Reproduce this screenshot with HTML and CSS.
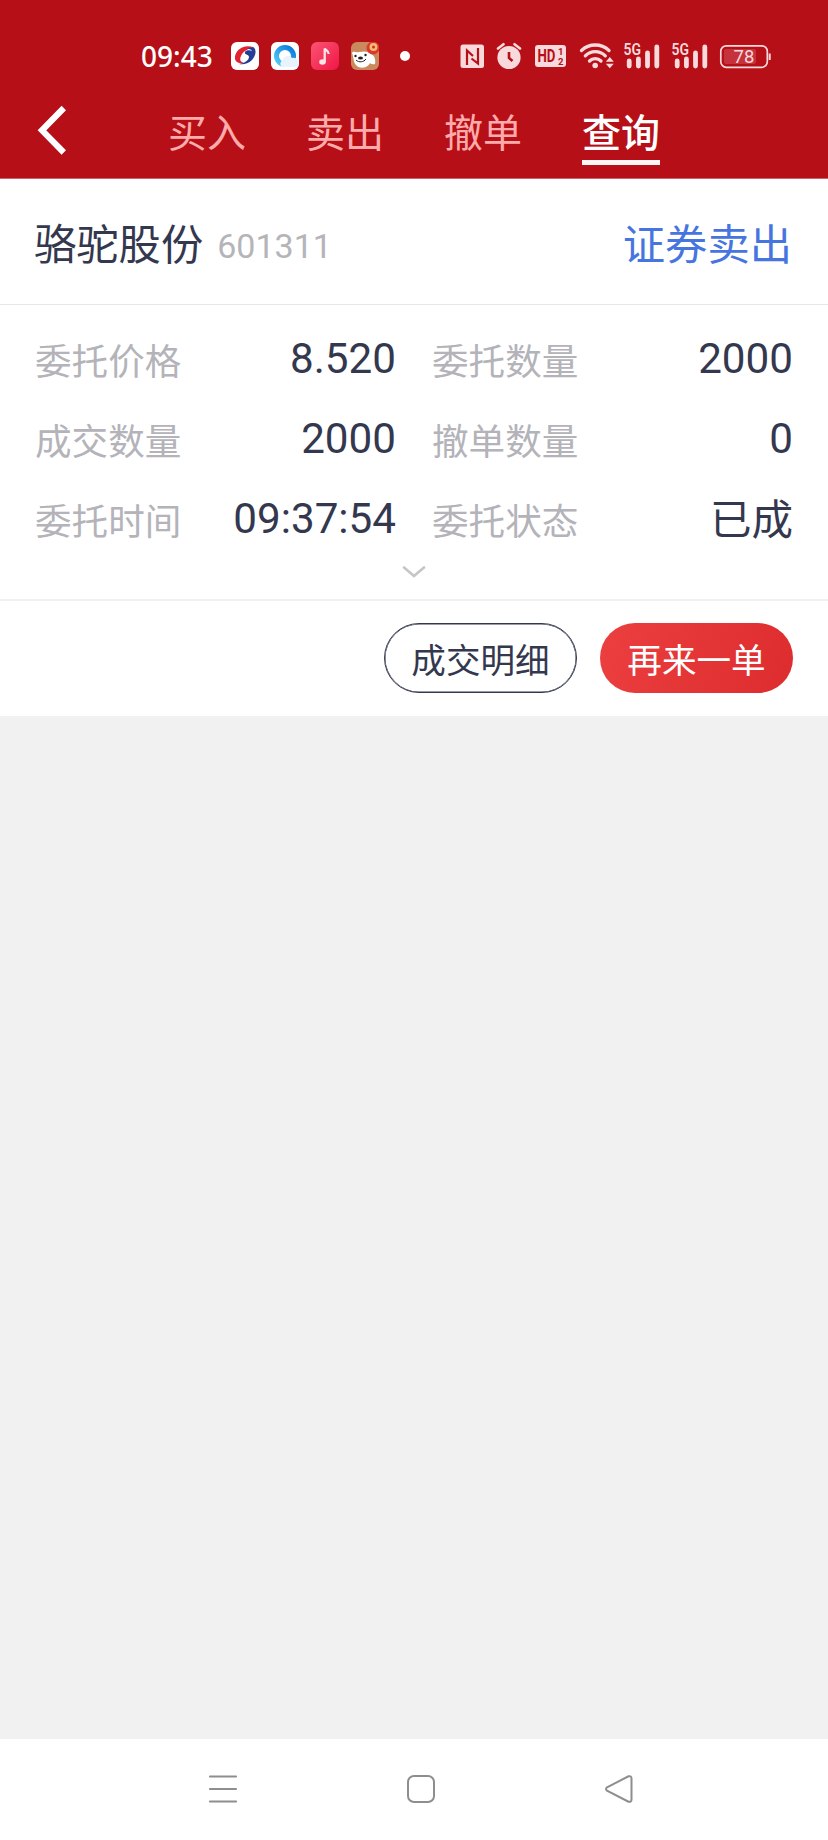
FILE: index.html
```html
<!DOCTYPE html>
<html lang="zh-CN">
<head>
<meta charset="utf-8">
<title>查询</title>
<link rel="stylesheet" href="styles.css">
</head>
<body>
<header class="top">
  <div class="status">
    <span class="clock">09:43</span>
    <div class="apps">
      <svg width="28" height="28" viewBox="0 0 28 28"><rect width="28" height="28" rx="6" fill="#fff"/><path d="M22 5C12 2 3 9 4 17c1 4 6 5 9 4-3-1-5-3-3-7 2-5 7-7 12-9z" fill="#e0232e"/><path d="M22 5c4 2 3 9-1 13-4 4-9 5-13 4 6-1 10-4 10-7 0-3-5-2-4-5 1-2 5-2 7-1-1-2-3-2-5-2 2-1 4-2 6-2z" fill="#253d94"/></svg>
      <svg width="28" height="28" viewBox="0 0 28 28"><defs><linearGradient id="sky" x1="0" y1="1" x2="1" y2="0"><stop offset="0" stop-color="#55ccf7"/><stop offset="1" stop-color="#0878dc"/></linearGradient></defs><rect width="28" height="28" rx="6" fill="#fff"/><circle cx="14" cy="14" r="8.500" fill="none" stroke="url(#sky)" stroke-width="5"/><path d="M11 25a4 4 0 0 1 1-7 5 5 0 0 1 9-2 5 5 0 0 1 4 9z" fill="#e7f3fd"/></svg>
      <svg width="28" height="28" viewBox="0 0 28 28"><defs><linearGradient id="music" x1="0" y1="0" x2="1" y2="1"><stop offset="0" stop-color="#fb5474"/><stop offset="1" stop-color="#f01645"/></linearGradient></defs><rect width="28" height="28" rx="6" fill="url(#music)"/><ellipse cx="11.500" cy="20" rx="3.300" ry="2.800" fill="#ffe4e8"/><path d="M13.700 20V6.500c1 2 4 2 4 5.500" fill="none" stroke="#ffe4e8" stroke-width="2.300"/></svg>
      <svg width="28" height="28" viewBox="0 0 28 28"><rect width="28" height="28" rx="6" fill="#c98b5e"/><path d="M1 11c1-3 4 0 7-1 5-1 9-1 12 2 3 1 5 5 4 10-3 1-5-1-5-1-2 5-10 6-13 3-4-3-3-8-5-13z" fill="#fff"/><circle cx="22" cy="6" r="6.500" fill="#dc382c"/><circle cx="22.500" cy="5" r="4" fill="#f3bd73"/><circle cx="22.500" cy="5" r="1.500" fill="#ce332a"/><circle cx="4.500" cy="14" r="1.200" fill="#222"/><circle cx="14.500" cy="13" r="1.200" fill="#222"/><ellipse cx="9.500" cy="16" rx="2.500" ry="1.500" fill="#222"/><path d="M5 18c3 3 8 2 10-1" fill="none" stroke="#222"/></svg>
    </div>
    <i class="dot"></i>
    <div class="system">
      <svg class="nfc" width="24" height="26" viewBox="460 42 24 26"><rect x="460.500" y="43.500" width="23.500" height="23.500" rx="2.500" fill="#f8d9dc"/><path d="M467 64V49.500l6 5.500M471.500 57.500l6.500 5V47" fill="none" stroke="#b60f17" stroke-width="2.200"/></svg>
      <svg class="alarm" width="26" height="28" viewBox="496 41 26 28"><circle cx="509" cy="56.500" r="11.600" fill="#f8d9dc"/><path d="M498 47.500l5.500-4.300M520 47.500l-5.500-4.300" stroke="#f8d9dc" stroke-width="2.600" stroke-linecap="round"/><path d="M509 51v6l3.500 3" fill="none" stroke="#b60f17" stroke-width="2.600"/></svg>
      <svg class="hd" width="32" height="24" viewBox="535 44 32 24"><rect x="535" y="45" width="31" height="22" rx="3" fill="#f8d9dc"/><text x="537.500" y="62.200" font-size="18" font-weight="700" textLength="18" lengthAdjust="spacingAndGlyphs" class="cut">HD</text><text x="558" y="55.200" font-size="9.500" font-weight="700" class="cut">1</text><text x="558" y="65.200" font-size="9.500" font-weight="700" class="cut">2</text></svg>
      <svg class="wifi" width="36" height="28" viewBox="579 41 36 28"><g fill="none" stroke="#f8d9dc" stroke-width="3.300" stroke-linecap="round"><path d="M581.500 49.500a20 20 0 0 1 27.500 0M585.300 54.800a14 14 0 0 1 20 0M589.500 60a8 8 0 0 1 11.500 0"/></g><circle cx="595.200" cy="64.500" r="2.800" fill="#f8d9dc"/><path d="M609.800 56l4 4.700h-8zM609.800 67.300l4-4.500h-8z" fill="#f8d9dc"/></svg>
      <svg class="sig" width="38" height="28" viewBox="623 41 38 28"><text x="623.500" y="54.300" font-size="16" font-weight="600" textLength="17.500" lengthAdjust="spacingAndGlyphs" class="ink">5G</text><path d="M629.200 60v5M638.400 58v7M647.500 52v13M656.800 46v19" stroke="#f8d9dc" stroke-width="4.800" stroke-linecap="round"/></svg>
      <svg class="sig two" width="38" height="28" viewBox="623 41 38 28"><text x="623.500" y="54.300" font-size="16" font-weight="600" textLength="17.500" lengthAdjust="spacingAndGlyphs" class="ink">5G</text><path d="M629.200 60v5M638.400 58v7M647.500 52v13M656.800 46v19" stroke="#f8d9dc" stroke-width="4.800" stroke-linecap="round"/></svg>
      <svg class="battery" width="54" height="28" viewBox="719 41 54 28"><rect x="720.800" y="44.800" width="46.500" height="21.500" rx="5.500" fill="none" stroke="#f8d9dc" stroke-width="1.700"/><rect x="724" y="48" width="32" height="15" rx="2" fill="#c5323b"/><path d="M769.700 52.500v6.500" stroke="#f8d9dc" stroke-width="2"/><text x="733.500" y="62.300" font-size="18.500" textLength="21" class="ink">78</text></svg>
    </div>
  </div>
  <nav class="tabs">
    <svg class="back" width="30" height="50" viewBox="0 0 30 50"><path d="M27.800 3L6 25.300l21.800 22.200" fill="none" stroke="#fff" stroke-width="6.200"/></svg>
    <a class="tab">买入</a><a class="tab">卖出</a><a class="tab">撤单</a><a class="tab active">查询</a>
  </nav>
</header>
<main class="card">
  <section class="stock"><h1 class="name">骆驼股份</h1><span class="code">601311</span><span class="side">证券卖出</span></section>
  <section class="details">
    <div class="cell"><span class="label">委托价格</span><span class="value">8.520</span></div>
    <div class="cell"><span class="label">委托数量</span><span class="value">2000</span></div>
    <div class="cell"><span class="label">成交数量</span><span class="value">2000</span></div>
    <div class="cell"><span class="label">撤单数量</span><span class="value">0</span></div>
    <div class="cell"><span class="label">委托时间</span><span class="value">09:37:54</span></div>
    <div class="cell"><span class="label">委托状态</span><span class="value word">已成</span></div>
    <svg class="expand" width="26" height="16" viewBox="0 0 26 16"><path d="M3 3.500l10 8.500 10-8.500" fill="none" stroke="#c6c6c8" stroke-width="2.700" stroke-linecap="round"/></svg>
  </section>
  <section class="actions"><button class="btn">成交明细</button><button class="btn primary">再来一单</button></section>
</main>
<footer class="navbar">
  <svg width="30" height="30" viewBox="0 0 30 30"><path d="M2 2.500h26M2 15h26M2 27.500h26" stroke-width="2.200" stroke-linecap="round"/></svg>
  <svg width="30" height="30" viewBox="0 0 30 30"><rect x="2" y="2" width="26" height="26" rx="6"/></svg>
  <svg width="30" height="30" viewBox="0 0 30 30"><path d="M3 13.300L24.500 2.300Q27.500 1.500 27.500 4.500V25.500Q27.500 28.500 24.500 27.700L3 16.700Q1 15 3 13.300z"/></svg>
</footer>
</body>
</html>
```
FILE: styles.css
```css
* { box-sizing: border-box; }
body {
  margin: 0;
  min-height: 1840px;
  display: flex;
  flex-direction: column;
  background: #f1f1f1;
  color: #34384f;
  font-family: "Noto Sans CJK SC", sans-serif;
}
svg { display: block; flex: none; }
.top { height: 179px; background: #b60f17; border-bottom: 1px solid #c4666b; }
.status { height: 90px; padding: 21px 0 0 141px; display: flex; align-items: center; }
.clock { width: 90px; font: 500 28px/70px "Noto Sans", sans-serif; color: #fff; }
.apps { display: flex; gap: 12px; }
.dot { width: 10px; height: 10px; margin-left: 21px; border-radius: 50%; background: #fff; }
.system { display: flex; align-items: center; margin-left: 50px; }
.alarm { margin-left: 12px; }
.hd { margin-left: 13px; }
.wifi { margin-left: 12px; }
.sig { margin-left: 8px; }
.sig.two { margin-left: 10px; }
.battery { margin-left: 10px; }
.ink { fill: #f8d9dc; font-family: Roboto, sans-serif; }
.cut { fill: #b60f17; font-family: Roboto, sans-serif; }
.tabs { height: 88px; padding-left: 36px; display: flex; align-items: flex-start; gap: 60px; }
.back { margin: 15px 42px 0 0; }
.tab { height: 75px; font-size: 39px; line-height: 81px; color: #ffabab; }
.tab.active { color: #fff; font-weight: 500; border-bottom: 5px solid #fff5f5; }
.card { background: #fff; height: 537px; }
.stock { height: 126px; padding: 0 36px 0 34px; display: flex; align-items: center; border-bottom: 1px solid #e7e7ea; }
.name { margin: 0; font-size: 42.3px; font-weight: 400; line-height: 80px; }
.code { margin-left: 14px; padding-top: 8px; font: 34px/40px Roboto, sans-serif; color: #b5b5b9; }
.side { margin-left: auto; font-size: 42.3px; line-height: 80px; color: #4675e0; }
.details {
  height: 296px;
  padding: 14px 35px 0 34px;
  display: grid;
  grid-template-columns: 362px 362px;
  grid-template-rows: 80px 80px 80px;
  column-gap: 35px;
  border-bottom: 2px solid #f0f0f1;
}
.cell { display: flex; justify-content: space-between; align-items: center; }
.label { padding: 2px 0 0 1px; font-size: 36.6px; line-height: 78px; color: #b3b3b9; }
.value { font-family: Roboto, "Noto Sans CJK SC", sans-serif; font-size: 42.2px; line-height: 80px; }
.word { padding-top: 3px; font-size: 41.5px; line-height: 77px; }
.expand { grid-column: 1 / 3; justify-self: center; margin-top: 5px; }
.actions { height: 115px; padding: 22px 35px 0; display: flex; justify-content: flex-end; gap: 23px; }
.btn {
  width: 193px;
  height: 70px;
  padding: 0;
  border: 1px solid #34384f;
  box-shadow: inset 0 0 0 0.5px #34384f;
  border-radius: 35px;
  background: #fff;
  color: #34384f;
  font-family: inherit;
  font-size: 34.6px;
  line-height: 60px;
}
.primary { border: 0; box-shadow: none; color: #fff; background: linear-gradient(110deg, #ec3f40, #dd2c2d); }
.navbar {
  height: 101px;
  margin-top: auto;
  padding: 0 0 1px 208px;
  display: flex;
  align-items: center;
  gap: 168px;
  background: #fff;
}
.navbar svg { fill: none; stroke: #8e8e8e; stroke-width: 2; }
```
